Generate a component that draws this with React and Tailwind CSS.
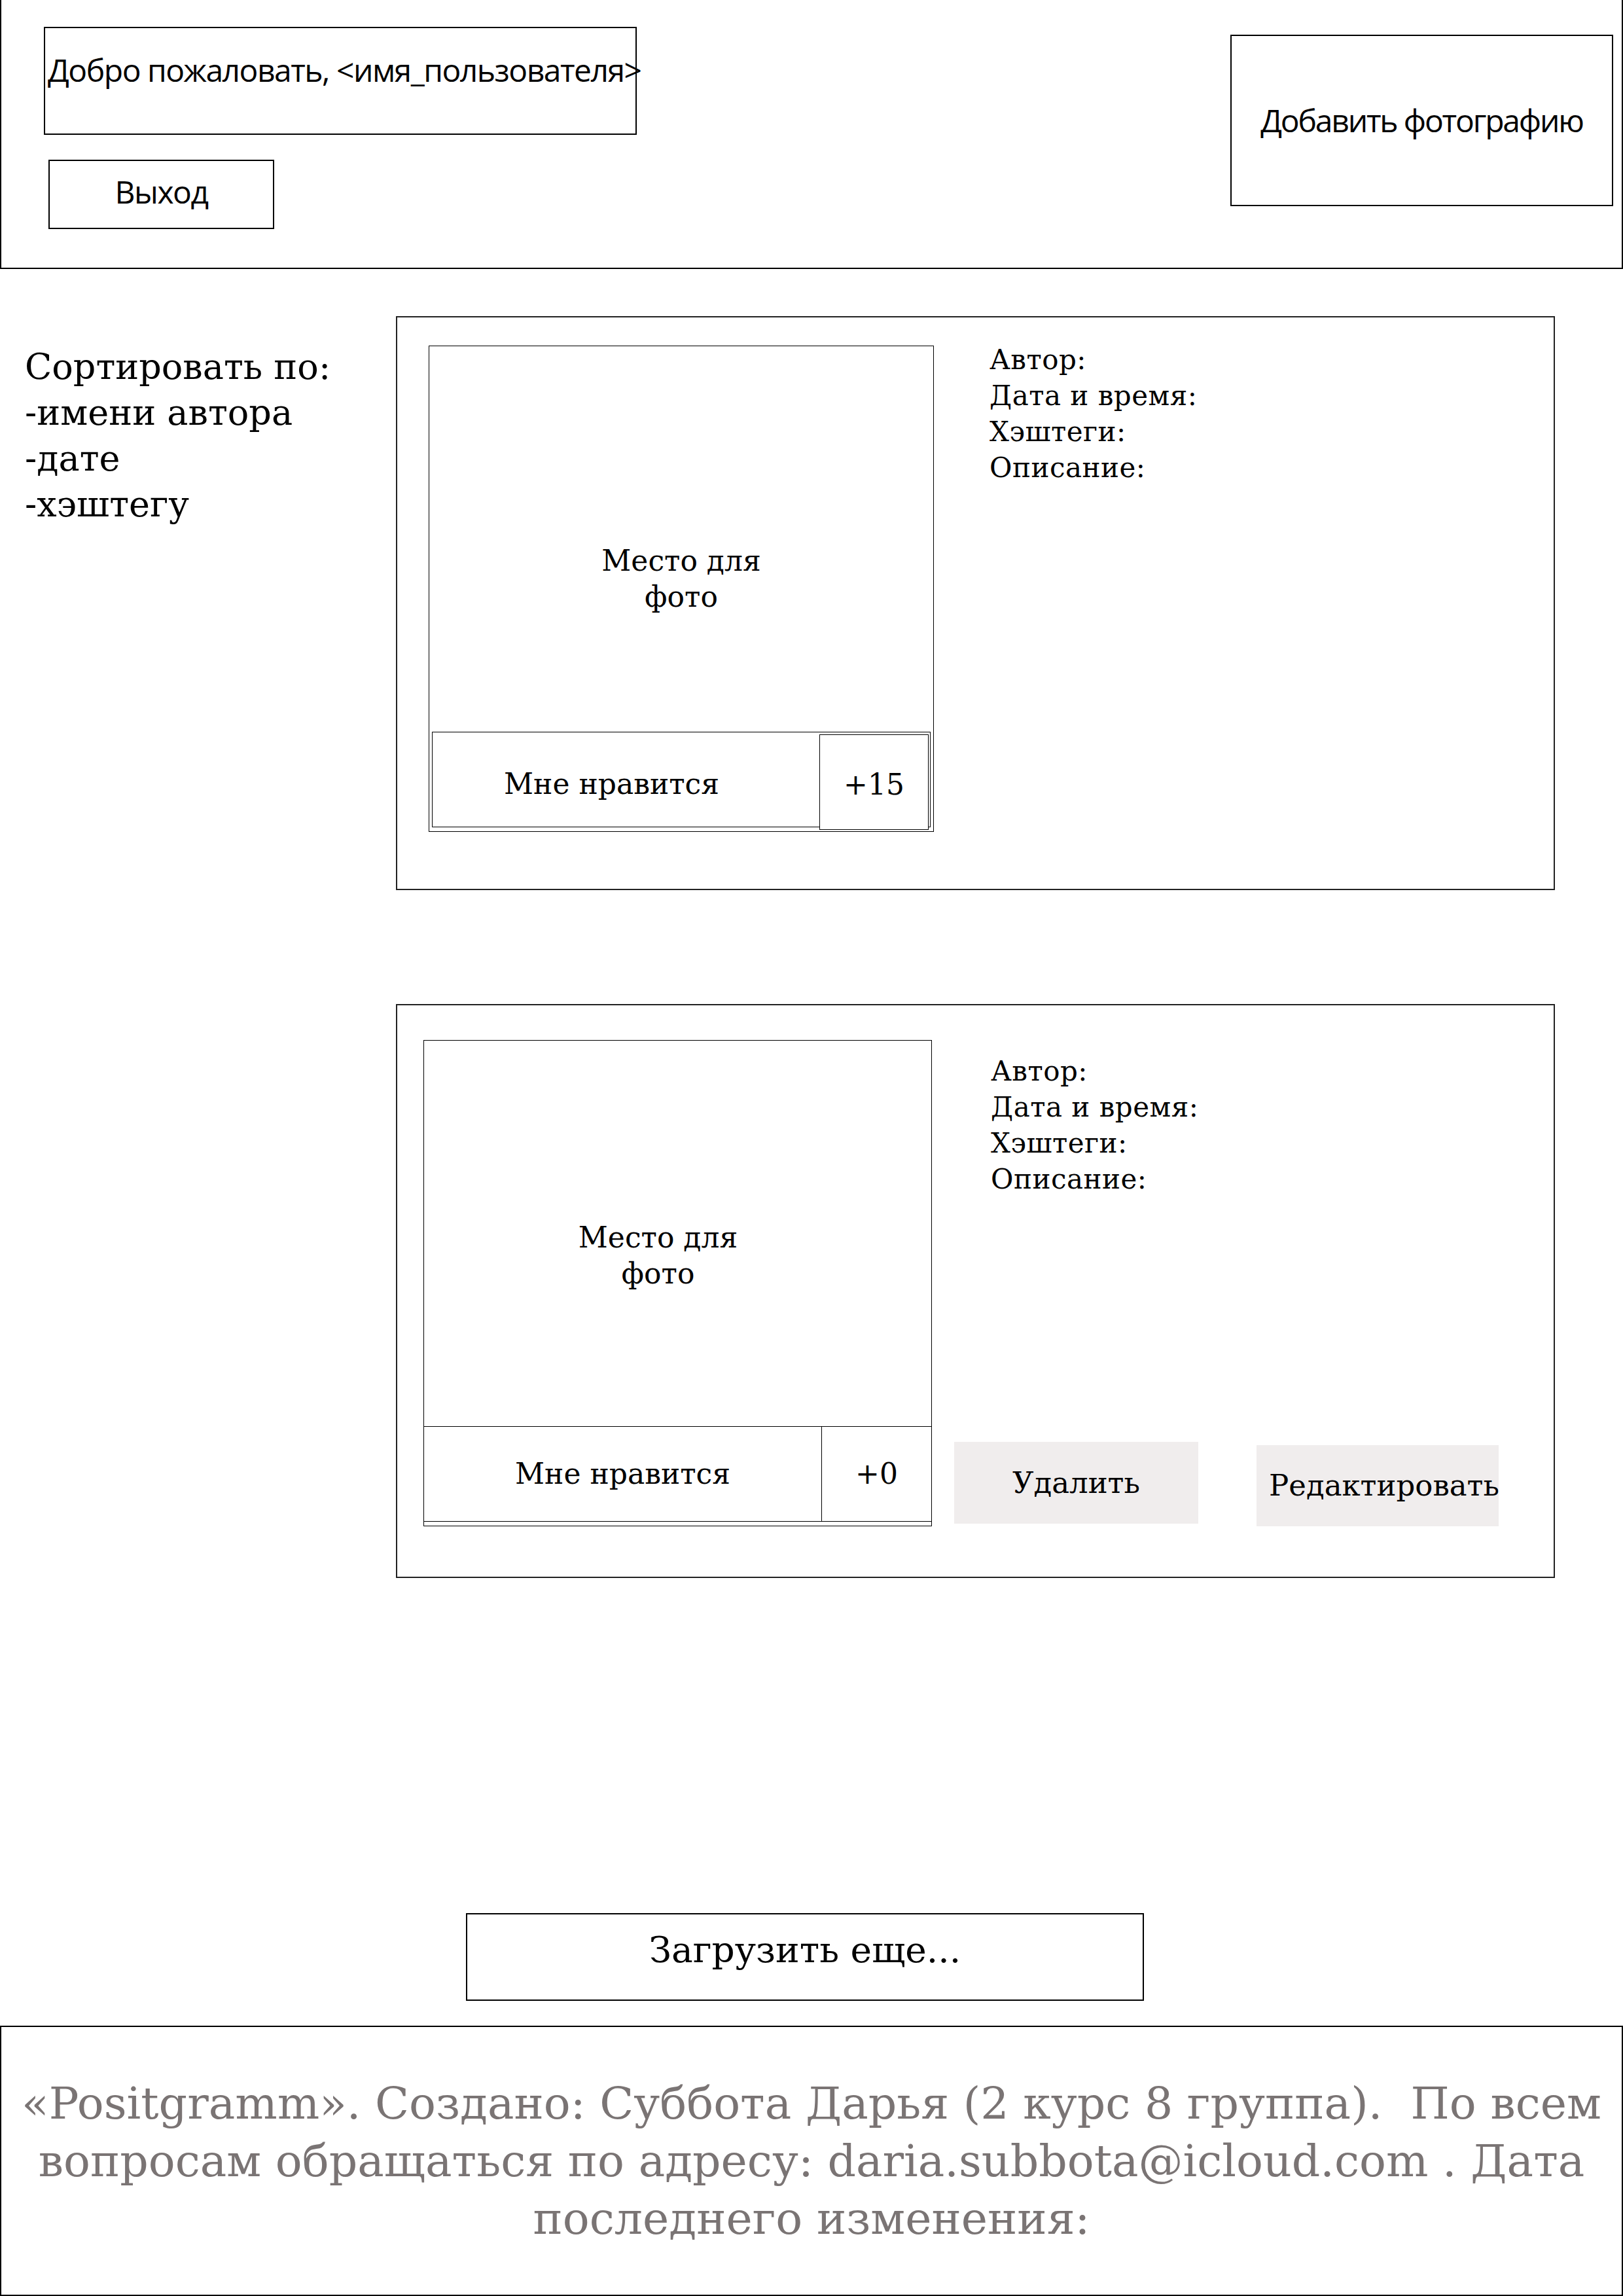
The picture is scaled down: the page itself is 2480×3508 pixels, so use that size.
export default function App() {
  const serif = "font-['DejaVu_Serif',serif]";
  const sans = "font-['Open_Sans',sans-serif]";
  return (
    <div className="w-[2480px] h-[3508px] bg-white flex flex-col text-black overflow-hidden">
      <header className="h-[411px] shrink-0 border-l-2 border-r-2 border-b-2 border-black flex justify-between">
        <div className="flex flex-col pl-[65px] pt-[41px]">
          <div className={`w-[906px] h-[165px] border-2 border-black flex items-start pt-[40px] pl-[4px] ${sans} text-[48px] leading-[48px] tracking-[-1.5px] whitespace-nowrap`}>
            Добро пожаловать, &lt;имя_пользователя&gt;
          </div>
          <div className={`ml-[7px] mt-[38px] w-[345px] h-[106px] border-2 border-black flex items-center justify-center pb-[8px] ${sans} text-[48px] leading-[48px] tracking-[-1.5px]`}>
            Выход
          </div>
        </div>
        <div className="pt-[53px] pr-[13px]">
          <div className={`w-[585px] h-[262px] border-2 border-black flex items-center justify-center ${sans} text-[48px] leading-[48px] tracking-[-2.2px] whitespace-nowrap`}>
            Добавить фотографию
          </div>
        </div>
      </header>

      <div className="flex shrink-0">
        <aside className={`w-[605px] shrink-0 pl-[38px] pt-[115px] ${serif} text-[54px] leading-[70px]`}>
          <div>Сортировать по:</div>
          <div>-имени автора</div>
          <div>-дате</div>
          <div>-хэштегу</div>
        </aside>

        <div className="flex flex-col pt-[72px]">
          {/* Card 1 */}
          <div className={`w-[1771px] h-[877px] border-2 border-[#222] flex items-start pl-[48px] pt-[43px] ${serif}`}>
            <div className="w-[772px] h-[743px] border border-black flex flex-col shrink-0">
              <div className="flex-1 flex items-center justify-center text-center pt-[120px] text-[44px] leading-[55px]">
                Место для
                <br />
                фото
              </div>
              <div className="mx-[4px] mb-[6px] h-[146px] border border-black flex items-start">
                <div className="w-[591px] h-full flex items-center justify-center pr-[44px] pt-[14px] text-[44px]">
                  Мне нравится
                </div>
                <div className="mt-[3px] h-[146px] w-[167px] border border-black bg-white flex items-center justify-center pt-[8px] text-[44px]">
                  +15
                </div>
              </div>
            </div>
            <div className="ml-[85px] mt-[-6px] text-[42px] leading-[55px] tracking-[0.5px]">
              <div>Автор:</div>
              <div>Дата и время:</div>
              <div>Хэштеги:</div>
              <div>Описание:</div>
            </div>
          </div>

          {/* Card 2 */}
          <div className={`mt-[174px] w-[1771px] h-[877px] border-2 border-[#222] flex items-start pl-[40px] pt-[53px] ${serif}`}>
            <div className="w-[777px] h-[743px] border border-black flex flex-col shrink-0">
              <div className="flex-1 flex items-center justify-center text-center pt-[66px] pr-[60px] text-[44px] leading-[55px]">
                Место для
                <br />
                фото
              </div>
              <div className="mb-[6px] h-[146px] border-y border-black flex">
                <div className="w-[607px] h-full flex items-center justify-center text-[44px]">
                  Мне нравится
                </div>
                <div className="flex-1 border-l border-black flex items-center justify-center text-[44px]">
                  +0
                </div>
              </div>
            </div>
            <div className="flex-1 h-[743px] flex flex-col justify-between">
              <div className="ml-[90px] mt-[20px] text-[42px] leading-[55px] tracking-[0.5px]">
                <div>Автор:</div>
                <div>Дата и время:</div>
                <div>Хэштеги:</div>
                <div>Описание:</div>
              </div>
              <div className="flex items-end ml-[34px] gap-[89px]">
                <div className="w-[373px] h-[125px] mb-[4px] bg-[#f0eded] flex items-center justify-center text-[45px]">
                  Удалить
                </div>
                <div className="w-[370px] h-[124px] bg-[#f0eded] flex items-center justify-center pl-[20px] text-[45px] whitespace-nowrap">
                  Редактировать
                </div>
              </div>
            </div>
          </div>
        </div>
      </div>

      <div className={`mt-[512px] ml-[712px] w-[1036px] h-[134px] shrink-0 border-2 border-black flex items-center justify-center pb-[22px] ${serif} text-[55px]`}>
        Загрузить еще...
      </div>

      <footer className={`mt-[38px] h-[413px] shrink-0 border-2 border-black flex flex-col items-center justify-center ${serif} text-[68px] leading-[88px] text-[#7a7474] whitespace-pre`}>
        <div>«Positgramm». Создано: Суббота Дарья (2 курс 8 группа).  По всем</div>
        <div>вопросам обращаться по адресу: daria.subbota@icloud.com . Дата</div>
        <div>последнего изменения:</div>
      </footer>
    </div>
  );
}
